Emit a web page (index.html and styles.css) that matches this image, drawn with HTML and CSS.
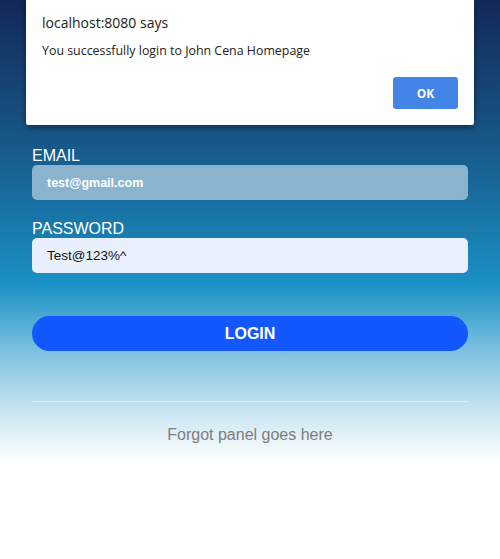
FILE: index.html
```html
<!DOCTYPE html>
<html>
<head>
<meta charset="utf-8">
<link rel="stylesheet" href="styles.css">
</head>
<body>
<div class="page">
  <form class="login">
    <label class="label">EMAIL</label>
    <div class="input email">test@gmail.com</div>
    <label class="label pw">PASSWORD</label>
    <div class="input password">Test@123%^</div>
    <button type="button" class="btn">LOGIN</button>
    <hr class="sep">
    <div class="forgot">Forgot panel goes here</div>
  </form>
</div>
<div class="dialog">
  <div class="dlg-title">localhost:8080 says</div>
  <div class="dlg-msg">You successfully login to John Cena Homepage</div>
  <div class="dlg-actions"><button type="button" class="ok">OK</button></div>
</div>
</body>
</html>
```
FILE: styles.css
```css
html, body {
  margin: 0;
  padding: 0;
  height: 100%;
  background: #fff;
}
.page {
  min-height: 559px;
  background: linear-gradient(to bottom, #132858 0px, #175a8b 150px, #1a91c5 285px, #7cc0e0 350px, #c6e4f1 410px, #ffffff 462px, #ffffff 559px);
  font-family: "Liberation Sans", Arial, sans-serif;
}
.login {
  display: flex;
  flex-direction: column;
  padding: 147px 32px 0;
}
.label {
  color: #fff;
  font-size: 16px;
  line-height: 18px;
}
.label.pw { margin-top: 20px; }
.input {
  margin-top: 0;
  height: 35px;
  box-sizing: border-box;
  border-radius: 5px;
  padding: 0 15px;
  display: flex;
  align-items: center;
  font-size: 13.5px;
}
.email {
  background: #8ab4cd;
  color: #fff;
  font-weight: bold;
  font-size: 12.5px;
}
.password {
  background: #e8f0fe;
  color: #111;
}
.btn {
  margin-top: 43px;
  height: 35px;
  border: none;
  border-radius: 18px;
  background: #1357ff;
  color: #fff;
  font-family: "Liberation Sans", Arial, sans-serif;
  font-weight: bold;
  font-size: 16px;
  padding: 0;
}
.sep {
  margin: 50px 0 0;
  border: none;
  height: 1px;
  background: rgba(255,255,255,0.45);
}
.forgot {
  margin-top: 24px;
  text-align: center;
  color: #7d7d7d;
  font-size: 16px;
  line-height: 18px;
}
.dialog {
  position: absolute;
  top: 0;
  left: 26px;
  width: 448px;
  height: 125px;
  box-sizing: border-box;
  background: #fff;
  border-radius: 0 0 2px 2px;
  box-shadow: 0 2px 6px rgba(0,0,0,0.45);
  padding: 13px 16px 0;
  font-family: "Open Sans", "Noto Sans", sans-serif;
  color: #222;
}
.dlg-title {
  font-size: 14px;
  line-height: 20px;
}
.dlg-msg {
  margin-top: 9px;
  font-size: 12.4px;
  line-height: 18px;
}
.dlg-actions {
  display: flex;
  justify-content: flex-end;
  margin-top: 17px;
}
.ok {
  width: 65px;
  height: 32px;
  border: none;
  border-radius: 3px;
  background: #4285e6;
  color: #fff;
  font-family: "Open Sans", "Noto Sans", sans-serif;
  font-weight: bold;
  font-size: 12px;
  padding: 0;
}
```
